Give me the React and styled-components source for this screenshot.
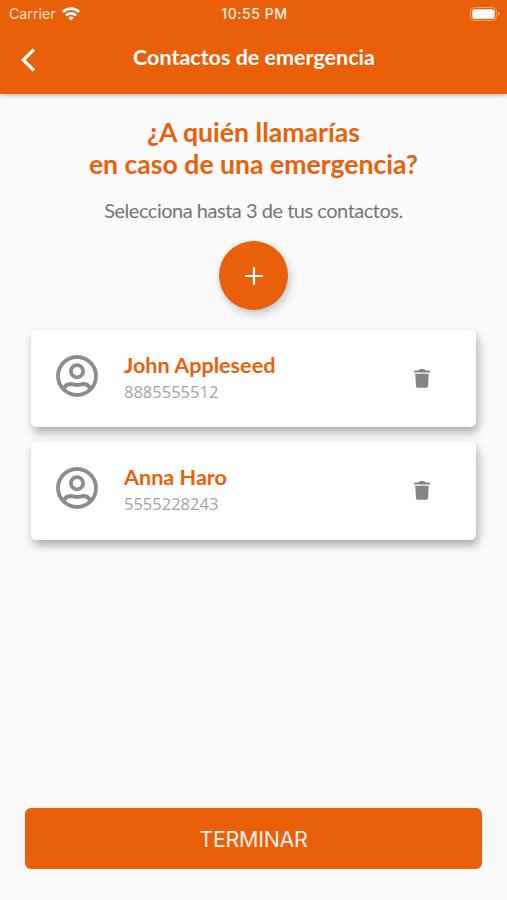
import React from "react";
import styled, { createGlobalStyle } from "styled-components";

const ORANGE = "#e95f0a";

const GlobalStyle = createGlobalStyle`
  * {
    box-sizing: border-box;
  }

  body {
    margin: 0;
    background: #fafafa;
    font-family: Lato, "Noto Sans", sans-serif;
  }
`;

const Screen = styled.div`
  display: flex;
  flex-direction: column;
  height: 100vh;
  background: #fafafa;
`;

const Header = styled.header`
  height: 94px;
  flex-shrink: 0;
  background: ${ORANGE};
  color: #fff;
  box-shadow: 0 1px 5px rgba(0, 0, 0, 0.3);
`;

const StatusBar = styled.div`
  display: grid;
  grid-template-columns: 1fr auto 1fr;
  align-items: center;
  height: 27px;
  padding: 0 7px 0 9px;
  font-family: Inter, sans-serif;
  font-size: 14.2px;
`;

const Carrier = styled.div`
  display: flex;
  align-items: center;
  gap: 6px;
  color: #fde3d0;
`;

const Time = styled.div`
  font-weight: 500;
  font-size: 14px;
  letter-spacing: 0.55px;
  color: #fff0e4;
`;

const Battery = styled.div`
  display: flex;
  justify-content: flex-end;
`;

const NavBar = styled.div`
  display: grid;
  grid-template-columns: 56px 1fr 56px;
  align-items: center;
  height: 64px;
`;

const BackButton = styled.button`
  display: flex;
  padding: 2px 0 0 20px;
  border: 0;
  background: none;
`;

const Title = styled.h1`
  margin: 0;
  padding: 0 0 5px 1px;
  font-size: 21.5px;
  font-weight: 700;
  line-height: 26px;
  text-align: center;
  white-space: nowrap;
`;

const Content = styled.main`
  flex: 1;
  display: flex;
  flex-direction: column;
  align-items: center;
  padding: 22px 31px 0;
`;

const Question = styled.h2`
  margin: 0;
  color: ${ORANGE};
  font-size: 26.6px;
  font-weight: 700;
  line-height: 32px;
  text-align: center;
  white-space: nowrap;
`;

const Hint = styled.p`
  margin: 17px 0 0;
  color: #757575;
  font-size: 20px;
  line-height: 26px;
  letter-spacing: -0.48px;
`;

const AddButton = styled.button`
  display: flex;
  align-items: center;
  justify-content: center;
  width: 69px;
  height: 69px;
  margin: 18px 0 20px;
  padding: 0;
  border: 0;
  border-radius: 50%;
  background: ${ORANGE};
  box-shadow: 2px 4px 8px rgba(0, 0, 0, 0.22);
`;

const ContactList = styled.ul`
  display: flex;
  flex-direction: column;
  gap: 15px;
  width: 100%;
  margin: 0;
  padding: 0;
  list-style: none;
`;

const ContactCard = styled.li`
  display: flex;
  align-items: center;
  height: 97.3px;
  padding: 0 46px 0 25px;
  border-radius: 5px;
  background: #fff;
  box-shadow: 2px 5px 10px rgba(0, 0, 0, 0.32);
`;

const Avatar = styled.div`
  display: flex;
  width: 68px;
  padding-bottom: 5px;
`;

const ContactInfo = styled.div`
  flex: 1;
  padding-bottom: 1px;
`;

const ContactName = styled.div`
  color: ${ORANGE};
  font-size: 21.6px;
  font-weight: 700;
  line-height: 27px;
`;

const ContactPhone = styled.div`
  color: #a3a3a3;
  font-family: "Open Sans", sans-serif;
  font-size: 16.5px;
  line-height: 25px;
`;

const DeleteButton = styled.button`
  display: flex;
  padding: 0;
  border: 0;
  background: none;
`;

const Footer = styled.footer`
  padding: 0 25px 31px;
`;

const FinishButton = styled.button`
  width: 100%;
  height: 61px;
  padding: 0;
  border: 0;
  border-radius: 6px;
  background: ${ORANGE};
  color: #fff2e8;
  font-family: Inter, sans-serif;
  font-size: 21.5px;
  letter-spacing: -0.3px;
`;

const contacts = [
  { name: "John Appleseed", phone: "8885555512" },
  { name: "Anna Haro", phone: "5555228243" },
];

const WifiIcon = () => (
  <svg width="18" height="14" viewBox="0 0 18 14" fill="none" stroke="#fff" strokeWidth="2.7">
    <path d="M.9 5a11.5 11.5 0 0 1 16.2 0" />
    <path d="M4 8.4a7.2 7.2 0 0 1 10 0" />
    <path d="M9 13.6 6.2 10.8a4 4 0 0 1 5.6 0Z" fill="#fff" stroke="none" />
  </svg>
);

const BatteryIcon = () => (
  <svg width="30" height="14" viewBox="0 0 30 14">
    <rect x="0.5" y="0.5" width="26" height="13" rx="4" fill="none" stroke="#fff" strokeOpacity="0.4" />
    <rect x="2.3" y="2.3" width="22.4" height="9.4" rx="2" fill="#fff" />
    <path d="M28 5v4q1.7-.6 1.7-2T28 5Z" fill="#fff" fillOpacity="0.5" />
  </svg>
);

const BackIcon = () => (
  <svg width="16" height="24" viewBox="0 0 16 24" fill="none" stroke="#fff" strokeWidth="3.2">
    <path d="M14 1.5 3.2 12 14 22.5" />
  </svg>
);

const PlusIcon = () => (
  <svg width="18" height="18" viewBox="0 0 18 18" stroke="#fff" strokeWidth="2.2">
    <path d="M9 0v18M0 9h18" />
  </svg>
);

const UserIcon = () => (
  <svg width="42" height="42" viewBox="0 0 42 42" fill="none" stroke="#8c8c8c" strokeWidth="3.8">
    <circle cx="21" cy="21" r="19" />
    <circle cx="21" cy="16.2" r="6.1" />
    <path d="M7.8 34C8.8 31 11.500 29 14.500 29c2 0 3.500 1 6.500 1s4.500-1 6.500-1c3 0 5.700 2 6.700 5" />
  </svg>
);

const TrashIcon = () => (
  <svg width="16" height="19" viewBox="0 0 16 19" fill="#858585">
    <path d="M.5 1.4H4.5Q5.5 0 6.5 0h3q1 0 2 1.4h4q.5 0 .5.5v1.5H0V1.9q0-.5.5-.5Z" />
    <path d="M1.2 4.7h13.6L14 17q-.1 1.8-1.8 1.8H3.8Q2.1 18.8 2 17Z" />
  </svg>
);

const App = () => {
  return (
    <Screen>
      <GlobalStyle />
      <Header>
        <StatusBar>
          <Carrier>
            Carrier
            <WifiIcon />
          </Carrier>
          <Time>10:55 PM</Time>
          <Battery>
            <BatteryIcon />
          </Battery>
        </StatusBar>
        <NavBar>
          <BackButton aria-label="Volver">
            <BackIcon />
          </BackButton>
          <Title>Contactos de emergencia</Title>
        </NavBar>
      </Header>
      <Content>
        <Question>
          ¿A quién llamarías
          <br />
          en caso de una emergencia?
        </Question>
        <Hint>Selecciona hasta 3 de tus contactos.</Hint>
        <AddButton aria-label="Agregar">
          <PlusIcon />
        </AddButton>
        <ContactList>
          {contacts.map((contact) => (
            <ContactCard key={contact.phone}>
              <Avatar>
                <UserIcon />
              </Avatar>
              <ContactInfo>
                <ContactName>{contact.name}</ContactName>
                <ContactPhone>{contact.phone}</ContactPhone>
              </ContactInfo>
              <DeleteButton aria-label="Eliminar">
                <TrashIcon />
              </DeleteButton>
            </ContactCard>
          ))}
        </ContactList>
      </Content>
      <Footer>
        <FinishButton>TERMINAR</FinishButton>
      </Footer>
    </Screen>
  );
};

export default App;
